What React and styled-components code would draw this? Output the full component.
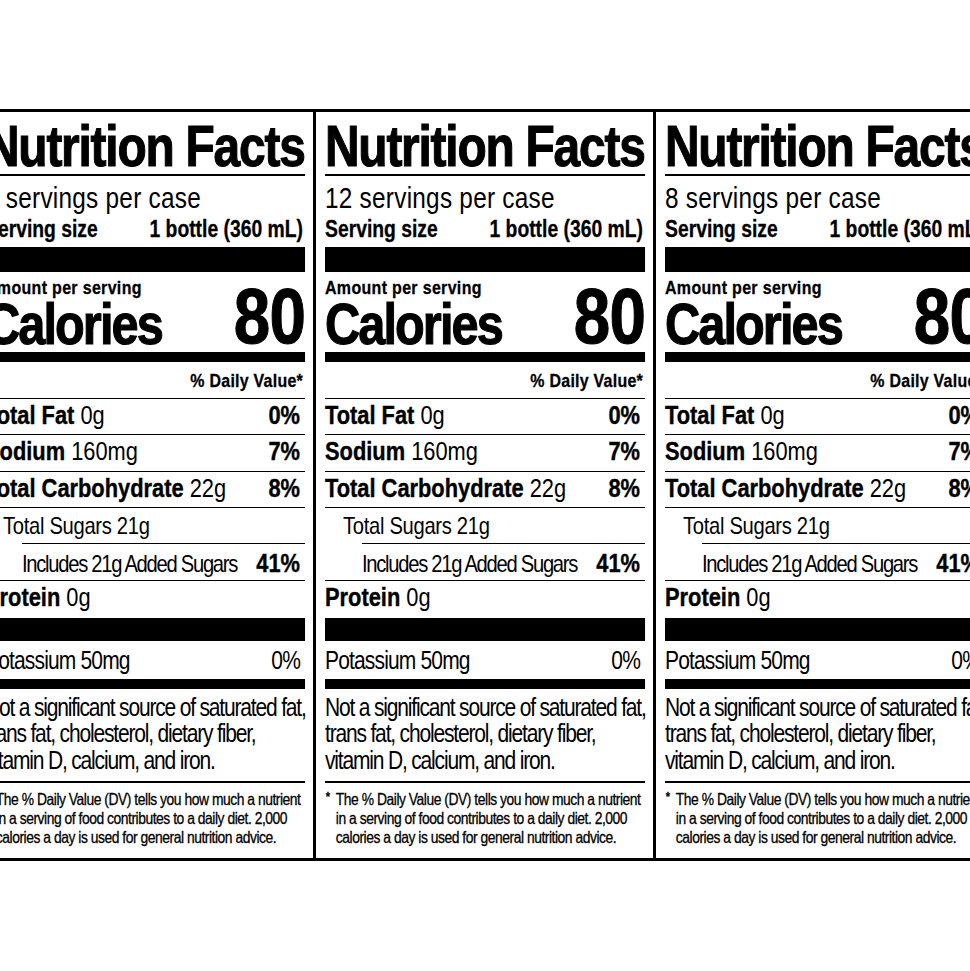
import React from "react";
import styled, { createGlobalStyle } from "styled-components";

// the printed label uses a condensed face; we squeeze Arial-metric text instead
const SQUEEZE = 0.84;
const u = (px) => px / SQUEEZE;

const labels = [
  { id: "left", servings: 6 },
  { id: "middle", servings: 12 },
  { id: "right", servings: 8 },
];

const nutrients = [
  { name: "Total Fat", amount: "0g", dv: "0%" },
  { name: "Sodium", amount: "160mg", dv: "7%" },
  { name: "Total Carbohydrate", amount: "22g", dv: "8%" },
  { text: "Total Sugars 21g", level: 1 },
  { text: "Includes 21g Added Sugars", dv: "41%", level: 2 },
  { name: "Protein", amount: "0g" },
];

const GlobalStyle = createGlobalStyle`
  html, body {
    margin: 0;
    padding: 0;
    background: #fff;
  }
  body {
    font-family: "Liberation Sans", Arial, Helvetica, sans-serif;
    color: #000;
  }
`;

const App = () => {
  return (
    <>
      <GlobalStyle />
      <Page>
        <Strip>
          {labels.map((l) => (
            <Panel key={l.id}>
              <Label>
                <Title>Nutrition Facts</Title>
                <Rule $h={2} $gap={2} />
                <ServingsLine>{l.servings} servings per case</ServingsLine>
                <ServingRow>
                  <span>Serving size</span>
                  <span>1 bottle (360 mL)</span>
                </ServingRow>
                <Rule $h={25} $gap={7} />
                <CaloriesRow>
                  <div>
                    <AmountLabel>Amount per serving</AmountLabel>
                    <CaloriesLabel>Calories</CaloriesLabel>
                  </div>
                  <CaloriesValue>80</CaloriesValue>
                </CaloriesRow>
                <Rule $h={10} $gap={2} />
                <DvHeader>% Daily Value*</DvHeader>
                {nutrients.map((n, i) => (
                  <NutrientRow key={i} $level={n.level || 0}>
                    {n.name ? (
                      <span>
                        <Name>{n.name}</Name> {n.amount}
                      </span>
                    ) : (
                      <SubName $level={n.level}>{n.text}</SubName>
                    )}
                    {n.dv && <Percent>{n.dv}</Percent>}
                  </NutrientRow>
                ))}
                <Rule $h={23} $gap={1} />
                <MineralRow>
                  <span>Potassium 50mg</span>
                  <span>0%</span>
                </MineralRow>
                <Rule $h={10} $gap={0} />
                <Note>
                  Not a significant source of saturated fat,
                  <br />
                  trans fat, cholesterol, dietary fiber,
                  <br />
                  vitamin D, calcium, and iron.
                </Note>
                <Rule $h={2} $gap={8} />
                <Footnote>
                  <Star>*</Star>
                  <div>
                    The % Daily Value (DV) tells you how much a nutrient
                    <br />
                    in a serving of food contributes to a daily diet. 2,000
                    <br />
                    calories a day is used for general nutrition advice.
                  </div>
                </Footnote>
              </Label>
            </Panel>
          ))}
        </Strip>
      </Page>
    </>
  );
};

export default App;

const Page = styled.div`
  margin-top: 109px;
  border-top: 3px solid #000;
  border-bottom: 3px solid #000;
  overflow: hidden;
`;

const Strip = styled.div`
  display: flex;
  margin-left: -27px;
`;

const Panel = styled.section`
  flex: 0 0 340px;
  box-sizing: border-box;
  width: 340px;
  border-left: 3px solid #000;
  padding: 8px 8px 10.5px 9px;
  overflow: hidden;
`;

const Label = styled.div`
  width: ${u(320)}px;
  transform: scaleX(${SQUEEZE});
  transform-origin: left top;
  white-space: nowrap;
`;

const Title = styled.h1`
  margin: 0;
  font-size: 57px;
  line-height: 52px;
  font-weight: 700;
  letter-spacing: -1.45px;
  -webkit-text-stroke: 1.1px #000;
`;

const Rule = styled.div`
  height: ${(p) => p.$h}px;
  margin-top: ${(p) => p.$gap}px;
  background: #000;
`;

const ServingsLine = styled.div`
  margin-top: 7.5px;
  font-size: 29px;
  line-height: 29px;
  letter-spacing: 0.3px;
`;

const ServingRow = styled.div`
  display: flex;
  justify-content: space-between;
  margin-top: 5.5px;
  padding-right: ${u(2)}px;
  font-size: 23px;
  line-height: 22px;
  font-weight: 700;
  -webkit-text-stroke: 0.3px #000;
`;

const CaloriesRow = styled.div`
  display: flex;
  justify-content: space-between;
  align-items: flex-end;
  margin-top: 6px;
  font-weight: 700;
`;

const AmountLabel = styled.div`
  font-size: 19px;
  line-height: 20px;
  letter-spacing: 0.4px;
  -webkit-text-stroke: 0.3px #000;
`;

const CaloriesLabel = styled.div`
  font-size: 58px;
  line-height: 52px;
  letter-spacing: -2.3px;
  -webkit-text-stroke: 1.1px #000;
`;

const CaloriesValue = styled.div`
  font-size: 78px;
  line-height: 65.8px;
  letter-spacing: -1px;
  -webkit-text-stroke: 1.1px #000;
`;

const DvHeader = styled.div`
  padding: 6px ${u(2)}px 4px 0;
  font-size: 19px;
  line-height: 26px;
  font-weight: 700;
  letter-spacing: 0.3px;
  text-align: right;
  -webkit-text-stroke: 0.3px #000;
`;

const NutrientRow = styled.div`
  display: flex;
  justify-content: space-between;
  align-items: baseline;
  border-top: 1px solid #000;
  margin-left: ${(p) => (p.$level === 2 ? u(37) : 0)}px;
  padding-left: ${(p) => (p.$level === 1 ? u(18) : 0)}px;
  padding-right: ${u(5)}px;
  padding-top: ${(p) => (p.$level ? 2.5 : 0)}px;
  padding-bottom: ${(p) => (p.$level ? 0.8 : 3.3)}px;
  font-size: 26px;
  line-height: 32px;
`;

const Name = styled.b`
  font-weight: 700;
  -webkit-text-stroke: 0.4px #000;
`;

const SubName = styled.span`
  font-size: 24px;
  letter-spacing: ${(p) => (p.$level === 2 ? -1.5 : -0.35)}px;
`;

const Percent = styled.span`
  font-weight: 700;
  -webkit-text-stroke: 0.4px #000;
`;

const MineralRow = styled.div`
  display: flex;
  justify-content: space-between;
  padding: 3.3px ${u(5)}px 2.7px 0;
  font-size: 25px;
  line-height: 32px;
  letter-spacing: -1px;
`;

const Note = styled.p`
  margin: 5px 0 0;
  font-size: 25px;
  line-height: 26.5px;
  letter-spacing: -1.4px;
`;

const Footnote = styled.div`
  display: flex;
  margin-top: 6.8px;
  font-size: 16.5px;
  line-height: 19px;
  letter-spacing: -0.55px;
  -webkit-text-stroke: 0.3px #000;
`;

const Star = styled.span`
  flex: 0 0 ${u(10)}px;
  padding-left: 1px;
  font-size: 13px;
  line-height: 14px;
  font-weight: 700;
`;
